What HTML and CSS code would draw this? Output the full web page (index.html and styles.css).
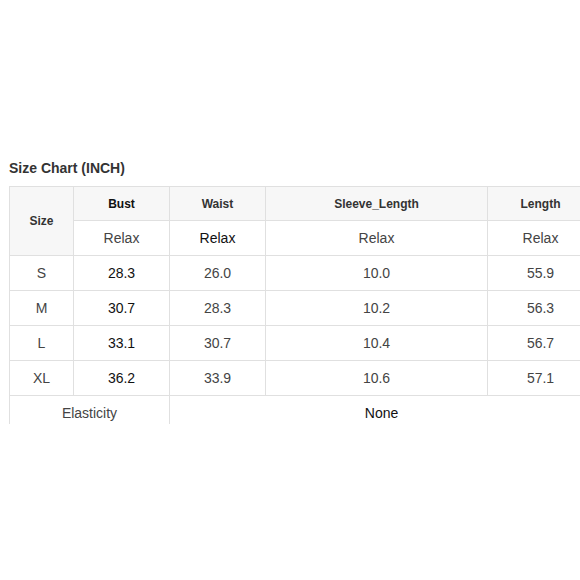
FILE: index.html
```html
<!DOCTYPE html>
<html>
<head>
<meta charset="utf-8">
<link rel="stylesheet" href="styles.css">
</head>
<body>
<div class="frame">
  <h2 class="title">Size Chart (INCH)</h2>
  <table class="chart">
    <colgroup>
      <col class="c-size"><col class="c-bust"><col class="c-waist"><col class="c-sleeve"><col class="c-length">
    </colgroup>
    <tr class="head">
      <th rowspan="2" class="hcell">Size</th>
      <th class="hcell dark">Bust</th>
      <th class="hcell">Waist</th>
      <th class="hcell">Sleeve_Length</th>
      <th class="hcell">Length</th>
    </tr>
    <tr>
      <td>Relax</td><td class="dark">Relax</td><td>Relax</td><td>Relax</td>
    </tr>
    <tr><td>S</td><td class="dark">28.3</td><td>26.0</td><td>10.0</td><td>55.9</td></tr>
    <tr><td>M</td><td class="dark">30.7</td><td>28.3</td><td>10.2</td><td>56.3</td></tr>
    <tr><td>L</td><td class="dark">33.1</td><td>30.7</td><td>10.4</td><td>56.7</td></tr>
    <tr><td>XL</td><td class="dark">36.2</td><td>33.9</td><td>10.6</td><td>57.1</td></tr>
    <tr><td colspan="2">Elasticity</td><td colspan="3" class="dark">None</td></tr>
  </table>
</div>
</body>
</html>
```
FILE: styles.css
```css
html, body {
  margin: 0;
  padding: 0;
  background: #fff;
}
.frame {
  width: 580px;
  height: 424px;
  overflow: hidden;
  padding: 160px 0 0 9px;
  box-sizing: border-box;
  font-family: "Liberation Sans", Arial, sans-serif;
}
.title {
  margin: 0 0 9px 0;
  font-size: 14px;
  line-height: 17px;
  font-weight: bold;
  color: #333;
}
.chart {
  border-collapse: collapse;
  table-layout: fixed;
  width: 584px;
}
.c-size { width: 64px; }
.c-bust { width: 96px; }
.c-waist { width: 96px; }
.c-sleeve { width: 222px; }
.c-length { width: 106px; }
.chart th, .chart td {
  border: 1px solid #e0e0e0;
  text-align: center;
  padding: 0;
  height: 34px;
  font-size: 14px;
  color: #444;
}
.chart .head th {
  height: 33px;
}
.chart th.hcell {
  background: #f7f7f7;
  font-size: 12px;
  font-weight: bold;
  color: #333;
}
.chart th.dark { color: #111; }
.chart td.dark { color: #111; }
```
